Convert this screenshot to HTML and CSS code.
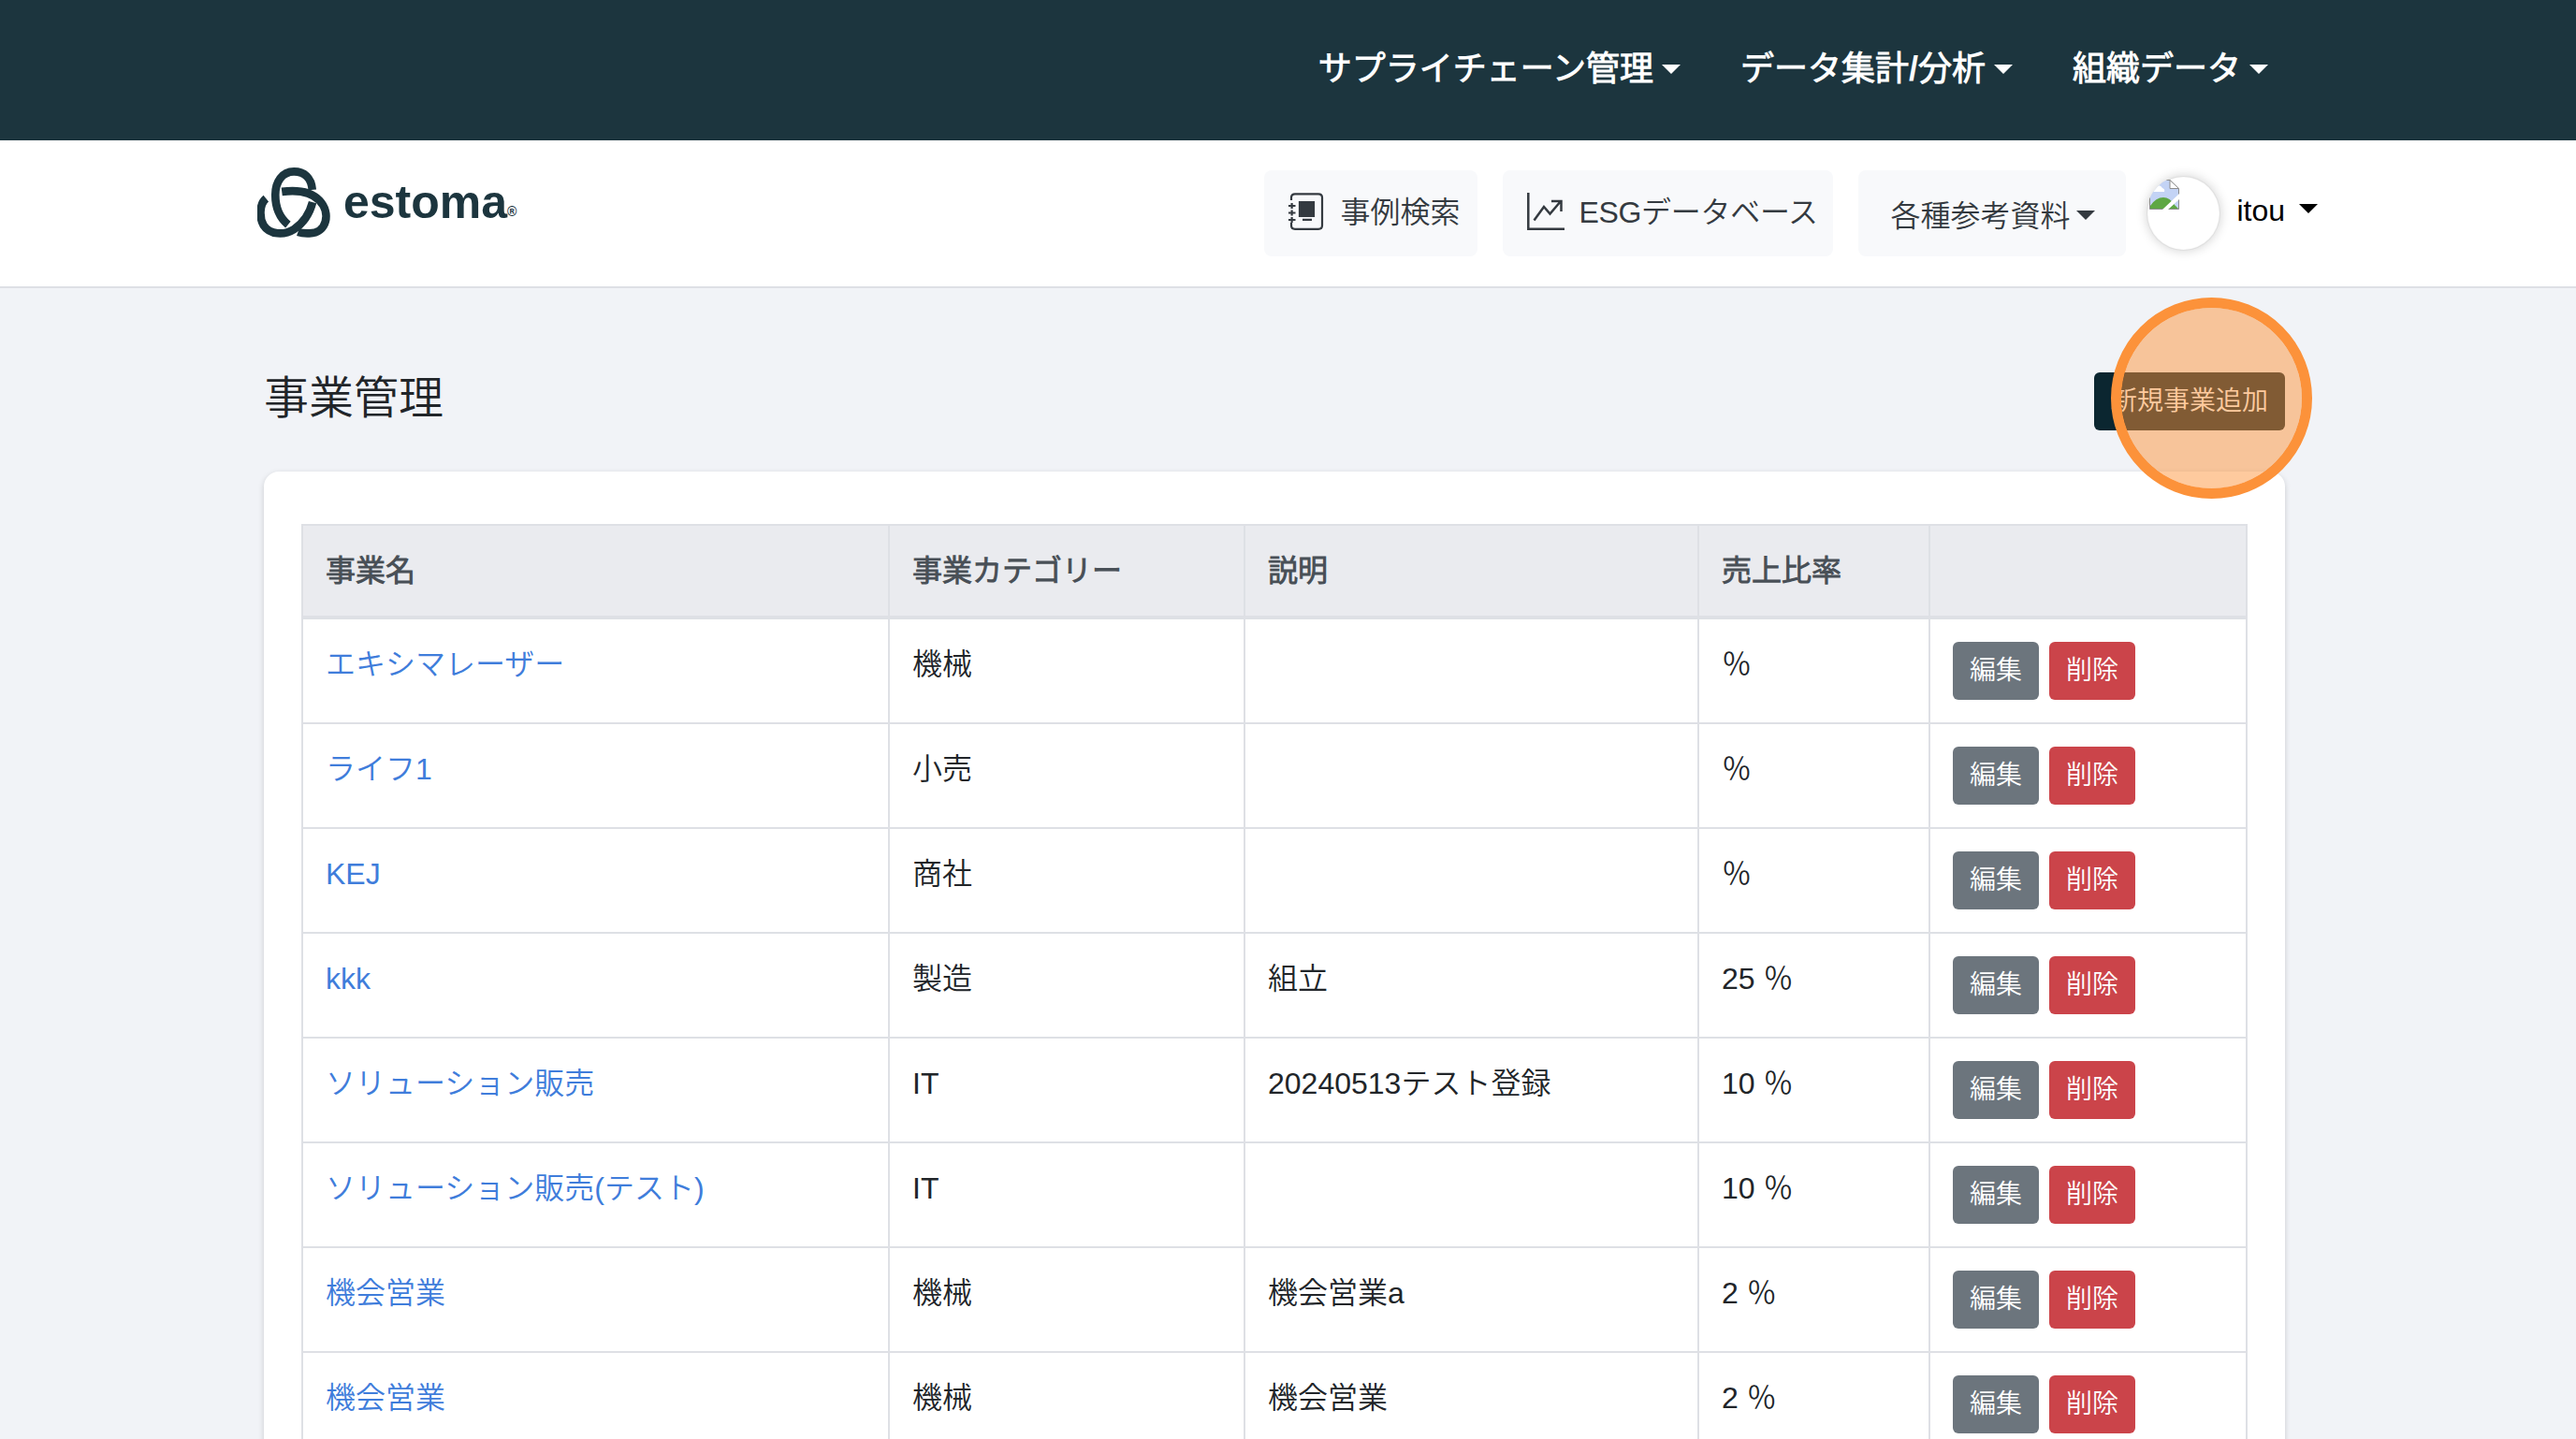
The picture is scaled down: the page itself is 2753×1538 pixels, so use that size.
FILE: index.html
```html
<!DOCTYPE html>
<html lang="ja">
<head>
<meta charset="utf-8">
<title>事業管理 | estoma</title>
<link rel="stylesheet" href="styles.css">
</head>
<body>
<nav class="topbar">
  <a class="topbar-item">サプライチェーン管理<span class="caret"></span></a>
  <a class="topbar-item">データ集計/分析<span class="caret"></span></a>
  <a class="topbar-item">組織データ<span class="caret"></span></a>
</nav>
<header class="header">
  <a class="logo">
    <svg class="logo-mark" viewBox="72 84 238 226" fill="none" stroke="#1c353e" stroke-width="26">
      <path d="M249 156C246 116 222 97 190 97C152 97 130 130 130 172C130 212 142 244 171 268"/>
      <path d="M151 162C205 155 246 163 272 190C310 230 296 296 240 296C228 296 217 297 203 292"/>
      <path d="M100 184C76 204 80 250 92 270C112 302 160 302 190 283C218 265 240 234 250 196"/>
    </svg>
    <span class="logo-text">estoma</span><span class="logo-reg">®</span>
  </a>
  <div class="header-actions">
    <a class="tool tool-cases">
      <svg class="tool-icon" viewBox="0 0 40 40" fill="none" stroke="#343a40" stroke-width="2.2">
        <path d="M5 8V5Q5 1.3 9 1.3H34Q38 1.3 38 5V35Q38 38.8 34 38.8H9Q5 38.8 5 35V32"/>
        <path d="M2 14H9.500M2 21.500H9.500M2 29H9.500M5.600 11V17M5.600 18.500V24.500M5.600 26V32"/>
        <path d="M14 10H29V25H14ZM17 28.800H27" fill="#343a40"/>
      </svg>
      <span>事例検索</span>
    </a>
    <a class="tool tool-esg">
      <svg class="tool-icon" viewBox="0 0 40 40" fill="none" stroke="#343a40" stroke-width="2.500">
        <path d="M1.300 0V38.700H40"/>
        <path d="M7.500 29.500L18 15L24.500 22.500L36 9M26 9H36.500V20"/>
      </svg>
      <span>ESGデータベース</span>
    </a>
    <a class="tool tool-docs"><span>各種参考資料</span><span class="caret"></span></a>
    <a class="user">
      <span class="avatar">
        <svg class="avatar-img" viewBox="0 0 32 32">
          <path d="M0.500 0.500H22L31.500 10V31.500H0.500Z" fill="#c3d3f5" stroke="#8d8d8d"/>
          <path d="M0 13Q2 7 7 8Q11 4 14 9Q17 10 16 13Z" fill="#fff"/>
          <path d="M1 31V28Q7 19 15 19Q22 19 27 27L31 31Z" fill="#5ea744"/>
          <path d="M14 32L32 15V21L20 32Z" fill="#fff"/>
          <path d="M22 0.500V9.500H31.500Z" fill="#fff" stroke="#8d8d8d"/>
        </svg>
      </span>
      <span class="user-name">itou</span><span class="caret"></span>
    </a>
  </div>
</header>
<main class="content">
  <div class="page-head">
    <h1 class="page-title">事業管理</h1>
    <div class="add-wrap"><a class="btn btn-add">新規事業追加</a><span class="click-marker"></span></div>
  </div>
  <section class="card">
    <table class="table">
      <colgroup><col class="col-name"><col class="col-cat"><col class="col-desc"><col class="col-ratio"><col class="col-act"></colgroup>
      <thead><tr><th>事業名</th><th>事業カテゴリー</th><th>説明</th><th>売上比率</th><th></th></tr></thead>
      <tbody>
        <tr><td><a class="link">エキシマレーザー</a></td><td>機械</td><td></td><td>％</td><td><div class="actions"><a class="btn btn-edit">編集</a><a class="btn btn-delete">削除</a></div></td></tr>
        <tr><td><a class="link">ライフ1</a></td><td>小売</td><td></td><td>％</td><td><div class="actions"><a class="btn btn-edit">編集</a><a class="btn btn-delete">削除</a></div></td></tr>
        <tr><td><a class="link">KEJ</a></td><td>商社</td><td></td><td>％</td><td><div class="actions"><a class="btn btn-edit">編集</a><a class="btn btn-delete">削除</a></div></td></tr>
        <tr><td><a class="link">kkk</a></td><td>製造</td><td>組立</td><td>25 ％</td><td><div class="actions"><a class="btn btn-edit">編集</a><a class="btn btn-delete">削除</a></div></td></tr>
        <tr><td><a class="link">ソリューション販売</a></td><td>IT</td><td>20240513テスト登録</td><td>10 ％</td><td><div class="actions"><a class="btn btn-edit">編集</a><a class="btn btn-delete">削除</a></div></td></tr>
        <tr><td><a class="link">ソリューション販売(テスト)</a></td><td>IT</td><td></td><td>10 ％</td><td><div class="actions"><a class="btn btn-edit">編集</a><a class="btn btn-delete">削除</a></div></td></tr>
        <tr><td><a class="link">機会営業</a></td><td>機械</td><td>機会営業a</td><td>2 ％</td><td><div class="actions"><a class="btn btn-edit">編集</a><a class="btn btn-delete">削除</a></div></td></tr>
        <tr><td><a class="link">機会営業</a></td><td>機械</td><td>機会営業</td><td>2 ％</td><td><div class="actions"><a class="btn btn-edit">編集</a><a class="btn btn-delete">削除</a></div></td></tr>
      </tbody>
    </table>
  </section>
</main>
</body>
</html>
```
FILE: styles.css
```css
* { box-sizing: border-box; }
html, body { height: 1538px; overflow: hidden; }
body {
  margin: 0;
  background: #f1f3f7;
  color: #212529;
  font: 350 32px/48px "Liberation Sans", "Noto Sans CJK JP DemiLight", "Noto Sans CJK JP", sans-serif;
  white-space: nowrap;
}
.caret {
  display: inline-block;
  border: 10px solid transparent;
  border-top-color: currentColor;
  border-bottom: 0;
}
.topbar {
  display: flex;
  justify-content: flex-end;
  align-items: center;
  gap: 64px;
  height: 150px;
  padding: 0 329px 2px 0;
  background: #1c353e;
  color: #fff;
  font-size: 36px;
  font-weight: 700;
}
.topbar-item { display: flex; align-items: center; gap: 9px; }
.header {
  display: flex;
  justify-content: space-between;
  height: 158px;
  padding: 0 276px 0 275px;
  background: #fff;
  border-bottom: 2px solid #dee0e5;
}
.logo { display: flex; padding-top: 29px; color: #1c353e; }
.logo-mark { width: 79px; height: 75px; }
.logo-text { margin: 10px 0 0 13px; font-size: 50px; font-weight: 700; line-height: 54px; }
.logo-reg { margin: 35px 0 0 0; font-size: 14px; line-height: 24px; font-weight: 700; }
.header-actions { display: flex; padding-top: 32px; color: #343a40; }
.tool {
  display: flex;
  height: 92px;
  margin-right: 27px;
  border-radius: 8px;
  background: #f8f9fb;
  line-height: 90px;
}
.tool-icon { width: 40px; height: 40px; margin-top: 24px; }
.tool-cases { width: 228px; padding-left: 24px; gap: 17px; }
.tool-esg { width: 353px; padding-left: 26px; gap: 15px; letter-spacing: -.3px; }
.tool-docs { width: 286px; padding-left: 34px; gap: 7px; line-height: 98px; margin-right: 22px; }
.tool-docs .caret { margin-top: 43px; }
.user { display: flex; align-items: flex-start; color: #000; }
.avatar {
  width: 79px;
  height: 80px;
  margin-top: 6px;
  overflow: hidden;
  border-radius: 50%;
  box-shadow: 0 0 12px rgba(0, 0, 0, .18), inset 0 0 1px 1px rgba(0, 0, 0, .14);
  padding: 4px 0 0 3px;
}
.avatar-img { display: block; width: 32px; height: 32px; }
.user-name { margin: 19px 15px 0 17px; }
.user .caret { margin-top: 36px; }
.content { height: 1230px; padding: 0 311px 0 282px; overflow: hidden; }
.page-head { display: flex; justify-content: space-between; height: 196px; }
.page-title { margin: 88px 0 0; font-size: 48px; font-weight: 350; line-height: 60px; }
.btn {
  display: block;
  height: 62px;
  padding: 0 18px;
  border-radius: 6px;
  color: #fff;
  font-size: 28px;
  line-height: 61px;
}
.add-wrap { position: relative; margin-top: 90px; height: 62px; }
.btn-add { background: #0b2630; }
.click-marker {
  position: absolute;
  left: 18px;
  top: -80px;
  width: 215px;
  height: 215px;
  border: 11px solid #fc923a;
  border-radius: 50%;
  background: rgba(252, 146, 58, .49);
  background-clip: padding-box;
}
.card {
  height: 1200px;
  padding: 56px 40px;
  border-radius: 16px;
  background: #fff;
  box-shadow: 0 2px 6px rgba(0, 0, 0, .16);
}
.table { width: 2080px; table-layout: fixed; border-collapse: collapse; }
.col-name { width: 627px; }
.col-cat { width: 380px; }
.col-desc { width: 485px; }
.col-ratio { width: 247px; }
.col-act { width: 339px; }
.table th, .table td { border: 2px solid #dee0e5; text-align: left; vertical-align: top; }
.table th {
  height: 99px;
  padding: 24px 24px 0;
  border-bottom-width: 4px;
  background: #eaebef;
  color: #495057;
  font-weight: 700;
}
.table td { height: 112px; padding: 24px 24px 0; }
.table tbody tr:first-child td { height: 113px; }
.link { color: #3f7ddb; }
.actions { display: flex; gap: 11px; }
.btn-edit { background: #6c757d; }
.btn-delete { background: #cb444a; }
```
